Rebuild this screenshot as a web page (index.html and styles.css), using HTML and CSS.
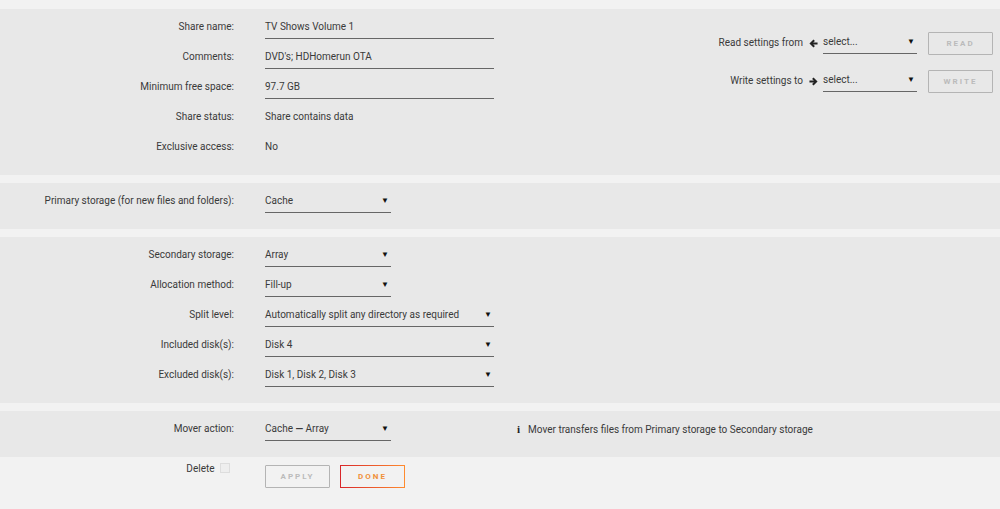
FILE: index.html
```html
<!DOCTYPE html>
<html lang="en">
<head>
  <meta charset="UTF-8">
  <title>Share Settings</title>
  <link rel="stylesheet" href="styles.css">
</head>
<body>

<div class="page">

  <!-- share info -->
  <div class="panel panel-top">
    <div class="form">
      <div class="row">
        <div class="label">Share name:</div>
        <div class="field wide">TV Shows Volume 1</div>
      </div>
      <div class="row">
        <div class="label">Comments:</div>
        <div class="field wide">DVD's; HDHomerun OTA</div>
      </div>
      <div class="row">
        <div class="label">Minimum free space:</div>
        <div class="field wide">97.7 GB</div>
      </div>
      <div class="row">
        <div class="label">Share status:</div>
        <div class="value">Share contains data</div>
      </div>
      <div class="row">
        <div class="label">Exclusive access:</div>
        <div class="value">No</div>
      </div>
    </div>

    <div class="clone">
      <div class="clone-row">
        <span class="clone-label">Read settings from</span>
        <svg class="arrow" width="9" height="9" viewBox="0 0 10 10"><path d="M0.5 5 L5 0.6 L6.6 2.2 L4.6 4 H9.5 V6 H4.6 L6.6 7.8 L5 9.4 Z" fill="#222"/></svg>
        <div class="field select mini">select...<span class="caret">▼</span></div>
        <button class="btn btn-off">READ</button>
      </div>
      <div class="clone-row">
        <span class="clone-label">Write settings to</span>
        <svg class="arrow" width="9" height="9" viewBox="0 0 10 10"><path d="M9.5 5 L5 0.6 L3.4 2.2 L5.4 4 H0.5 V6 H5.4 L3.4 7.8 L5 9.4 Z" fill="#222"/></svg>
        <div class="field select mini">select...<span class="caret">▼</span></div>
        <button class="btn btn-off">WRITE</button>
      </div>
    </div>
  </div>

  <!-- primary storage -->
  <div class="panel">
    <div class="row">
      <div class="label">Primary storage (for new files and folders):</div>
      <div class="field select short">Cache<span class="caret">▼</span></div>
    </div>
  </div>

  <!-- secondary storage -->
  <div class="panel">
    <div class="row">
      <div class="label">Secondary storage:</div>
      <div class="field select short">Array<span class="caret">▼</span></div>
    </div>
    <div class="row">
      <div class="label">Allocation method:</div>
      <div class="field select short">Fill-up<span class="caret">▼</span></div>
    </div>
    <div class="row">
      <div class="label">Split level:</div>
      <div class="field select wide">Automatically split any directory as required<span class="caret">▼</span></div>
    </div>
    <div class="row">
      <div class="label">Included disk(s):</div>
      <div class="field select wide">Disk 4<span class="caret">▼</span></div>
    </div>
    <div class="row">
      <div class="label">Excluded disk(s):</div>
      <div class="field select wide">Disk 1, Disk 2, Disk 3<span class="caret">▼</span></div>
    </div>
  </div>

  <!-- mover -->
  <div class="panel">
    <div class="row">
      <div class="label">Mover action:</div>
      <div class="field select short">Cache <span class="dash">—</span> Array<span class="caret">▼</span></div>
      <div class="info"><span class="info-icon">i</span>Mover transfers files from Primary storage to Secondary storage</div>
    </div>
  </div>

  <div class="actions">
    <div class="label delete">Delete <span class="check"></span></div>
    <button class="btn btn-off">APPLY</button>
    <button class="btn btn-done">DONE</button>
  </div>

</div>

</body>
</html>
```

FILE: styles.css
```css
body {
  margin: 0;
  background: #f2f2f2;
  color: #3a3a3a;
  font-family: Roboto, "Liberation Sans", sans-serif;
  font-size: 10px;
}

.page {
  padding-top: 9px;
}

.panel {
  background: #e8e8e8;
  padding: 8px 0;
  margin-bottom: 8px;
}

.panel-top {
  display: flex;
  justify-content: space-between;
}

.row {
  display: flex;
  align-items: flex-start;
  height: 22px;
  margin-bottom: 8px;
}

.label {
  width: 234px;
  text-align: right;
  line-height: 20px;
  margin-right: 31px;
}

.value {
  line-height: 20px;
}

.field {
  line-height: 20px;
  border-bottom: 1px solid #666;
  box-sizing: border-box;
  height: 22px;
  position: relative;
  white-space: nowrap;
}

.field.wide {
  width: 229px;
}

.field.short {
  width: 126px;
}

.field.mini {
  width: 94px;
}

.caret {
  position: absolute;
  right: 2px;
  top: 0;
  font-size: 8px;
  color: #111;
}

.dash {
  font-weight: bold;
}

.info {
  margin-left: 126px;
  line-height: 20px;
}

.info-icon {
  font-family: "Liberation Serif", serif;
  font-size: 11px;
  font-weight: bold;
  color: #222;
  margin-right: 8px;
}

/* read / write settings block */
.clone {
  padding: 15px 7px 0 0;
}

.clone-row {
  display: flex;
  justify-content: flex-end;
  align-items: flex-start;
  margin-bottom: 15px;
}

.clone-label {
  line-height: 22px;
}

.arrow {
  margin: 7px 5px 0 6px;
}

.clone .btn {
  margin-left: 11px;
}

/* buttons */
.btn {
  width: 65px;
  height: 23px;
  background: transparent;
  font-family: inherit;
  font-size: 8px;
  font-weight: bold;
  letter-spacing: 2px;
  cursor: pointer;
  padding: 0;
}

.btn-off {
  border: 1px solid #b4b4b4;
  color: #bbb;
  border-radius: 1px;
}

.btn-done {
  border: 1px solid;
  border-image: linear-gradient(90deg, #d8262a, #ff8c2f) 1;
  color: #f0903a;
  margin-left: 10px;
}

.actions {
  display: flex;
  align-items: flex-start;
}

.delete {
  width: 230px;
  margin-right: 35px;
  margin-top: -6px;
}

.check {
  display: inline-block;
  width: 8px;
  height: 8px;
  border: 1px solid #ddd;
  background: #eee;
  vertical-align: -1px;
  margin-left: 3px;
}
```
